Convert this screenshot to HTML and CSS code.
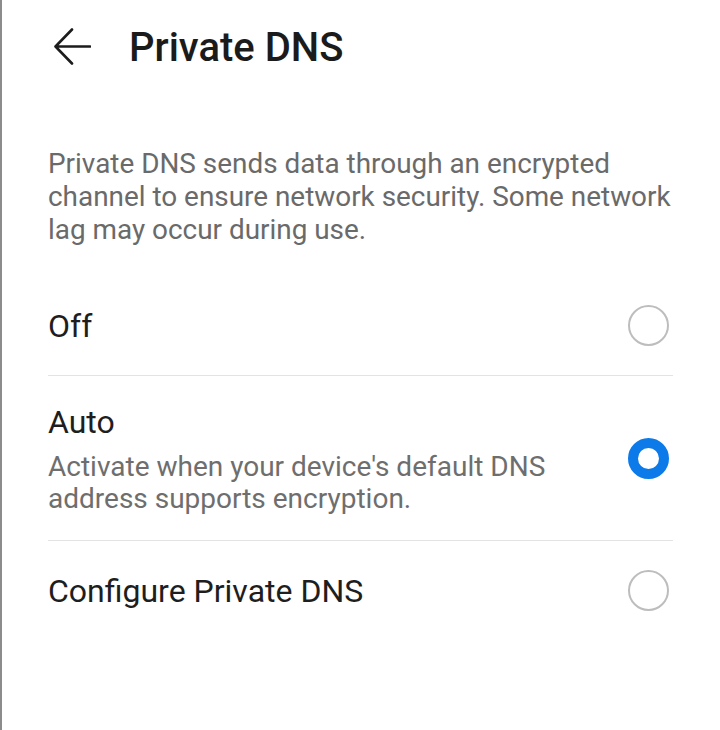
FILE: index.html
```html
<!DOCTYPE html>
<html lang="en">
<head>
    <meta charset="UTF-8">
    <meta name="viewport" content="width=device-width, initial-scale=1.0">
    <title>Private DNS</title>
    <link rel="stylesheet" href="styles.css">
</head>
<body>
    <div class="screen">
        <div class="header">
            <svg class="back-icon" width="38" height="38" viewBox="0 0 38 38">
                <path d="M3 18.5 H37 M19 1.5 L2.5 18.5 L19 35.5" fill="none" stroke="#1c1c1c" stroke-width="2.6" stroke-linecap="round" stroke-linejoin="round"/>
            </svg>
            <h1 class="title">Private DNS</h1>
        </div>

        <p class="description">Private DNS sends data through an encrypted channel to ensure network security. Some network lag may occur during use.</p>

        <div class="options">
            <div class="option">
                <div class="option-text">
                    <div class="option-title">Off</div>
                </div>
                <span class="radio"></span>
            </div>
            <div class="option">
                <div class="option-text">
                    <div class="option-title">Auto</div>
                    <div class="option-sub">Activate when your device's default DNS address supports encryption.</div>
                </div>
                <span class="radio checked"></span>
            </div>
            <div class="option">
                <div class="option-text">
                    <div class="option-title">Configure Private DNS</div>
                </div>
                <span class="radio"></span>
            </div>
        </div>
    </div>
</body>
</html>
```

FILE: styles.css
```css
body {
    margin: 0;
    padding: 0;
    background-color: #ffffff;
    font-family: Roboto, 'Noto Sans', sans-serif;
}

.screen {
    min-height: 730px;
    box-sizing: border-box;
    border-left: 2px solid #8c8c8c;
}

.header {
    display: flex;
    align-items: center;
    padding: 24px 0 0 51px;
}

.back-icon {
    display: block;
    margin-top: -3px;
}

.title {
    margin: 0 0 0 38px;
    font-size: 40px;
    line-height: 48px;
    font-weight: 500;
    color: #1b1b1b;
}

.description {
    margin: 75px 46px 0 46px;
    font-size: 27.9px;
    line-height: 33px;
    color: #6a6a6a;
}

.options {
    margin: 30px 47px 0 46px;
}

.option {
    display: flex;
    align-items: center;
    padding: 29px 4px 29px 0;
}

.option + .option {
    border-top: 1px solid #e3e3e3;
}

.option:nth-child(2) {
    padding: 26px 4px 25px 0;
}

.option-text {
    flex: 1;
}

.option-title {
    font-size: 32px;
    line-height: 40px;
    color: #1e1e1e;
}

.option-sub {
    margin-top: 9px;
    max-width: 540px;
    font-size: 28px;
    line-height: 32px;
    color: #6e6e6e;
}

.radio {
    width: 37px;
    height: 37px;
    border: 2px solid #bdbdbd;
    border-radius: 50%;
}

.radio.checked {
    width: 21px;
    height: 21px;
    border: 10px solid #0c7ae8;
}
```
